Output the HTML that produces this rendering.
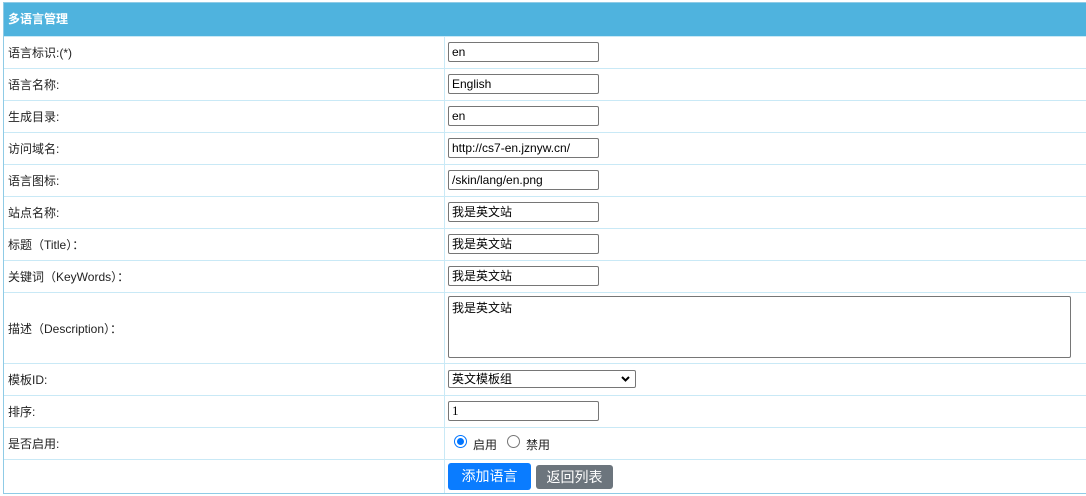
<!DOCTYPE html>
<html><head><meta charset="utf-8"><style>
*{box-sizing:border-box;margin:0;padding:0}
body{width:1086px;height:496px;background:#fff;font-family:"Liberation Sans","Noto Sans CJK SC",sans-serif;font-size:12px;color:#222;position:relative;overflow:hidden}
.wrap{position:absolute;left:3px;top:2px;width:1084px;height:492px;border:1px solid #8fcbe6;border-right:none}
.hd{position:absolute;left:0;top:0;right:0;height:33px;background:#4fb3de;color:#fff;font-weight:bold;font-size:12px;line-height:33px;padding-left:4px}
.row{position:absolute;left:0;right:0;border-top:1px solid #c9e9f6}
.lab{position:absolute;left:4px;top:0;bottom:0;display:flex;align-items:center}
.vl{position:absolute;left:440px;top:33px;bottom:0;border-left:1px solid #c9e9f6}
.in{position:absolute;left:444px;width:151px;height:20px;border:1px solid #767676;border-radius:2px;padding-left:3px;line-height:18px;font-size:12px;color:#000}
</style></head><body>
<div class="wrap">
<div class="hd">多语言管理</div>
<div class="vl"></div>
<div class="row" style="top:33px;height:32px"><span class="lab">语言标识:(*)</span></div>
<div class="row" style="top:65px;height:32px"><span class="lab">语言名称:</span></div>
<div class="row" style="top:97px;height:32px"><span class="lab">生成目录:</span></div>
<div class="row" style="top:129px;height:32px"><span class="lab">访问域名:</span></div>
<div class="row" style="top:161px;height:32px"><span class="lab">语言图标:</span></div>
<div class="row" style="top:193px;height:32px"><span class="lab">站点名称:</span></div>
<div class="row" style="top:225px;height:32px"><span class="lab">标题（Title）：</span></div>
<div class="row" style="top:257px;height:32px"><span class="lab">关键词（KeyWords）：</span></div>
<div class="row" style="top:289px;height:71px"><span class="lab">描述（Description）：</span></div>
<div class="row" style="top:360px;height:32px"><span class="lab">模板ID:</span></div>
<div class="row" style="top:392px;height:32px"><span class="lab">排序:</span></div>
<div class="row" style="top:424px;height:32px"><span class="lab">是否启用:</span></div>
<div class="row" style="top:456px;height:36px"></div>

<div class="in" style="top:39px">en</div>
<div class="in" style="top:71px">English</div>
<div class="in" style="top:103px">en</div>
<div class="in" style="top:135px">http://cs7-en.jznyw.cn/</div>
<div class="in" style="top:167px">/skin/lang/en.png</div>
<div class="in" style="top:199px">我是英文站</div>
<div class="in" style="top:231px">我是英文站</div>
<div class="in" style="top:263px">我是英文站</div>
<div class="in" style="top:293px;width:623px;height:62px;line-height:18px;padding-top:2px">我是英文站</div>
<div class="in" style="top:367px;width:188px;height:18px;line-height:16px">英文模板组<svg style="position:absolute;right:5px;top:5px" width="9" height="6" viewBox="0 0 9 6"><path d="M1 1l3.5 3.5L8 1" stroke="#000" stroke-width="2" fill="none"/></svg></div>
<div class="in" style="top:398px;font-family:'Liberation Serif',serif;font-size:13px">1</div>
<div style="position:absolute;left:450px;top:432px;width:13px;height:13px;border-radius:50%;border:1px solid #0075ff;background:#fff"><div style="position:absolute;left:2px;top:2px;width:7px;height:7px;border-radius:50%;background:#0075ff"></div></div>
<span style="position:absolute;left:469px;top:433px">启用</span>
<div style="position:absolute;left:503px;top:432px;width:13px;height:13px;border-radius:50%;border:1px solid #767676;background:#fff"></div>
<span style="position:absolute;left:522px;top:433px">禁用</span>
<div style="position:absolute;left:444px;top:460px;width:83px;height:27px;background:#0a7cff;border-radius:3px;color:#fff;font-size:14px;text-align:center;line-height:27px">添加语言</div>
<div style="position:absolute;left:532px;top:462px;width:77px;height:24px;background:#6c757d;border-radius:3px;color:#fff;font-size:14px;text-align:center;line-height:24px">返回列表</div>
</div>
</body></html>
